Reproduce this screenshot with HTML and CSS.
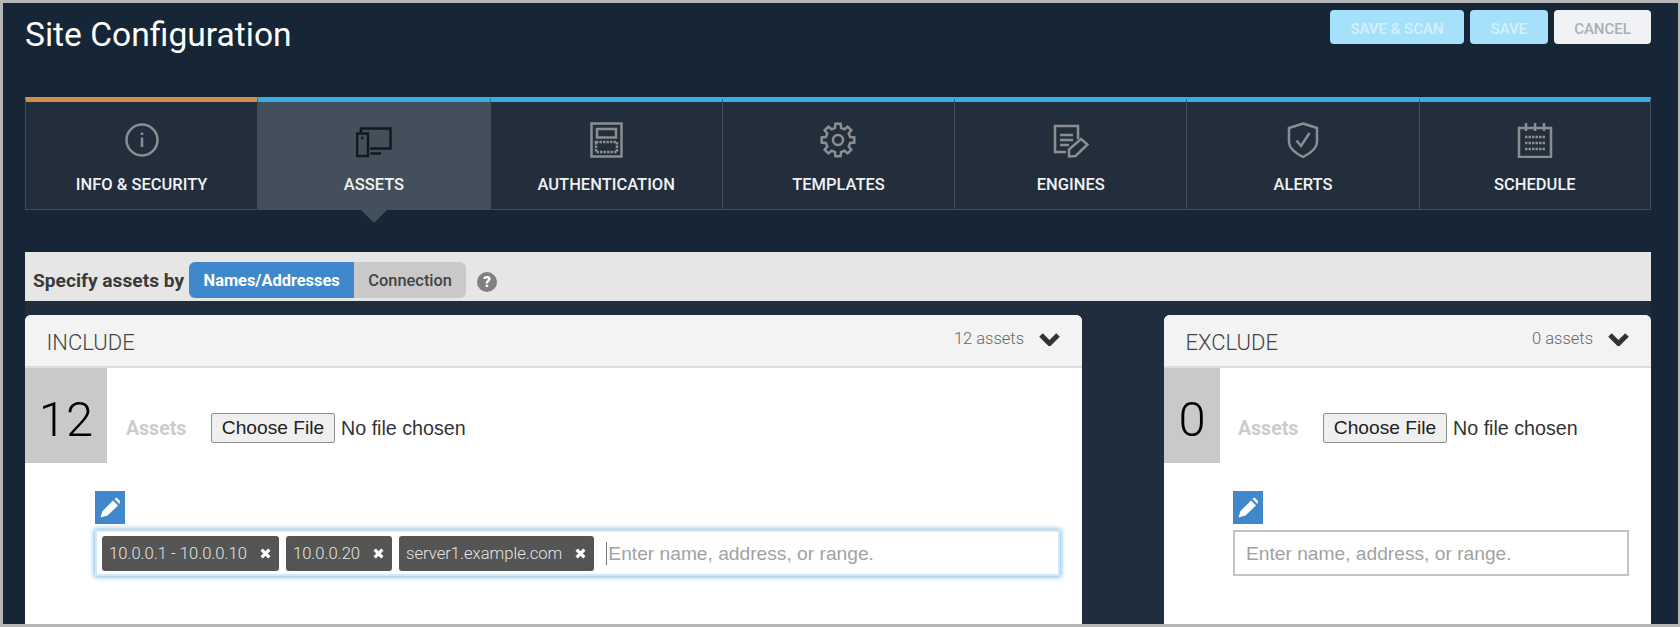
FILE: index.html
```html
<!DOCTYPE html>
<html lang="en">
<head>
    <meta charset="UTF-8">
    <meta name="viewport" content="width=device-width, initial-scale=1.0">
    <title>Site Configuration</title>
    <link rel="stylesheet" href="styles.css">
</head>
<body>
    <div class="frame">
        <header class="top">
            <h1 class="title">Site Configuration</h1>
            <div class="actions">
                <button class="action primary wide">SAVE &amp; SCAN</button>
                <button class="action primary">SAVE</button>
                <button class="action cancel">CANCEL</button>
            </div>
        </header>

        <nav class="tabs">
            <div class="tab tab-info">
                <svg class="tab-icon" viewBox="0 0 36 36"><circle cx="18" cy="18" r="15.5"/><path d="M18 15.5V25M18 10.5V13"/></svg>
                <span>INFO &amp; SECURITY</span>
            </div>
            <div class="tab active">
                <svg class="tab-icon" viewBox="0 0 36 36"><path d="M5 11V6.500H34.500V26.500H14"/><rect x="1" y="11.500" width="11" height="22.500"/><path d="M14.500 31.500H25M5 16H7.500"/></svg>
                <span>ASSETS</span>
            </div>
            <div class="tab">
                <svg class="tab-icon" viewBox="0 0 36 36"><rect x="3.500" y="1.500" width="30" height="33"/><rect x="9" y="7" width="19" height="8.500"/><rect class="dots" x="8" y="20" width="21" height="10"/></svg>
                <span>AUTHENTICATION</span>
            </div>
            <div class="tab">
                <svg class="tab-icon" viewBox="0 0 36 36"><polygon points="14.98,5.87 15.42,1.7 20.58,1.7 21.02,5.87 24.44,7.29 27.7,4.65 31.35,8.3 28.71,11.56 30.13,14.98 34.3,15.42 34.3,20.58 30.13,21.02 28.71,24.44 31.35,27.7 27.7,31.35 24.44,28.71 21.02,30.13 20.58,34.3 15.42,34.3 14.98,30.13 11.56,28.71 8.3,31.35 4.65,27.7 7.29,24.44 5.87,21.02 1.7,20.58 1.7,15.42 5.87,14.98 7.29,11.56 4.65,8.3 8.3,4.65 11.56,7.29"/><circle cx="18" cy="18" r="5"/></svg>
                <span>TEMPLATES</span>
            </div>
            <div class="tab">
                <svg class="tab-icon" viewBox="0 0 36 36"><path d="M25 17V4H2V30H13M7 13H20M7 18H20M7 23H16"/><path d="M16 27.500L28 17L34.500 22.500L22.500 34L16 34.500Z"/></svg>
                <span>ENGINES</span>
            </div>
            <div class="tab">
                <svg class="tab-icon" viewBox="0 0 36 36"><path d="M18 1.500L32 6V20C32 27 25 31.500 18 35C11 31.500 4 27 4 20V6Z"/><path d="M11.500 18.500L16 24L24.500 11"/></svg>
                <span>ALERTS</span>
            </div>
            <div class="tab">
                <svg class="tab-icon" viewBox="0 0 36 36"><rect x="2" y="6" width="32" height="29"/><path d="M9 1V9M18 1V9M27 1V9"/><path class="dots" d="M8 15H28M8 21H28M8 27H28"/></svg>
                <span>SCHEDULE</span>
            </div>
        </nav>

        <div class="specify">
            <span class="specify-label">Specify assets by</span>
            <div class="segments">
                <span class="segment on">Names/Addresses</span>
                <span class="segment">Connection</span>
            </div>
            <span class="help">?</span>
        </div>

        <div class="panels">
            <section class="panel">
                <div class="panel-head">
                    <span class="panel-title">INCLUDE</span>
                    <span class="panel-count">12 assets</span>
                    <svg class="chevron" viewBox="0 0 21 14"><path d="M2 3L10.500 11.500L19 3"/></svg>
                </div>
                <div class="asset-row">
                    <div class="count count-big">12</div>
                    <div class="asset-fields">
                        <span class="asset-label">Assets</span>
                        <button class="file-btn">Choose File</button>
                        <span class="file-name">No file chosen</span>
                    </div>
                </div>
                <div class="editor">
                    <button class="edit-btn">
                        <svg viewBox="0 0 30 33"><path d="M5.500 26.500L7.500 20L18 9.500L23 14.500L12.500 24.500ZM19.500 8L21.500 6.500L25 10L24.500 13Z"/></svg>
                    </button>
                    <div class="tag-input focused">
                        <span class="tag">10.0.0.1 - 10.0.0.10<svg class="tag-x" viewBox="0 0 10 10"><path d="M1.500 1.500L8.500 8.500M8.500 1.500L1.500 8.500"/></svg></span>
                        <span class="tag">10.0.0.20<svg class="tag-x" viewBox="0 0 10 10"><path d="M1.500 1.500L8.500 8.500M8.500 1.500L1.500 8.500"/></svg></span>
                        <span class="tag">server1.example.com<svg class="tag-x" viewBox="0 0 10 10"><path d="M1.500 1.500L8.500 8.500M8.500 1.500L1.500 8.500"/></svg></span>
                        <span class="placeholder with-caret">Enter name, address, or range.</span>
                    </div>
                </div>
            </section>

            <section class="panel">
                <div class="panel-head">
                    <span class="panel-title">EXCLUDE</span>
                    <span class="panel-count">0 assets</span>
                    <svg class="chevron" viewBox="0 0 21 14"><path d="M2 3L10.500 11.500L19 3"/></svg>
                </div>
                <div class="asset-row">
                    <div class="count">0</div>
                    <div class="asset-fields">
                        <span class="asset-label">Assets</span>
                        <button class="file-btn">Choose File</button>
                        <span class="file-name">No file chosen</span>
                    </div>
                </div>
                <div class="editor">
                    <button class="edit-btn">
                        <svg viewBox="0 0 30 33"><path d="M5.500 26.500L7.500 20L18 9.500L23 14.500L12.500 24.500ZM19.500 8L21.500 6.500L25 10L24.500 13Z"/></svg>
                    </button>
                    <div class="tag-input">
                        <span class="placeholder">Enter name, address, or range.</span>
                    </div>
                </div>
            </section>
        </div>
    </div>
</body>
</html>
```

FILE: styles.css
```css
* {
    box-sizing: border-box;
}
html, body {
    margin: 0;
    height: 100%;
    overflow: hidden;
}
body {
    font-family: Roboto, Arial, sans-serif;
    background-color: #17273a;
}
.frame {
    display: flex;
    flex-direction: column;
    height: 627px;
    padding: 0 27px 0 22px;
    border: 3px solid #b4b6b8;
    border-right-width: 2px;
    background-color: #162636;
    overflow: hidden;
}

/* title and save buttons */
.top {
    display: flex;
    justify-content: space-between;
    align-items: flex-start;
    height: 94px;
    padding-top: 7px;
}
.title {
    margin: 6px 0 0;
    font-size: 33.6px;
    line-height: 38px;
    font-weight: 400;
    color: #ffffff;
}
.actions {
    display: flex;
    gap: 6px;
}
.action {
    height: 34px;
    padding: 4px 0 0;
    width: 78px;
    border: none;
    border-radius: 4px;
    font-family: Roboto, Arial, sans-serif;
    font-size: 15px;
    font-weight: 500;
}
.action.wide {
    width: 134px;
}
.action.primary {
    background-color: #a6e1fb;
    color: #d6f0fb;
}
.action.cancel {
    width: 97px;
    background-color: #f0f2f5;
    color: #a9afb6;
}

/* step tabs */
.tabs {
    position: relative;
    display: grid;
    grid-template-columns: repeat(7, 1fr);
    height: 113px;
}
.tab {
    position: relative;
    display: flex;
    flex-direction: column;
    align-items: center;
    padding-top: 20px;
    background-color: #232e3c;
    border-top: 5px solid #38ade3;
    border-left: 1px solid #414d5a;
    border-bottom: 1px solid #414d5a;
    color: #f0f2f4;
    font-size: 16.5px;
    line-height: 20px;
    font-weight: 500;
}
.tab:last-child {
    border-right: 1px solid #414d5a;
}
.tab-info {
    border-top-color: #cd9146;
}
.tab.active {
    background-color: #434f5b;
    border-left-color: #434f5b;
    border-bottom-color: #434f5b;
}
.tab.active::after {
    content: "";
    position: absolute;
    left: 50%;
    top: 108px;
    margin-left: -13px;
    border-left: 13px solid transparent;
    border-right: 13px solid transparent;
    border-top: 13px solid #434f5b;
}
.tab-icon {
    width: 36px;
    height: 36px;
    margin-bottom: 17px;
    fill: none;
    stroke: #8b8e91;
    stroke-width: 2.500;
}
.tab.active .tab-icon {
    stroke: #14181e;
}
.tab-icon .dots {
    stroke-dasharray: 2.500 1;
}

/* specify assets bar */
.specify {
    display: flex;
    align-items: flex-start;
    height: 49px;
    margin-top: 42px;
    padding: 10px 0 0 8px;
    background-color: #e6e6e6;
}
.specify-label {
    margin-right: 5px;
    line-height: 37px;
    font-size: 19.2px;
    font-weight: 700;
    color: #3a3a3a;
}
.segments {
    display: flex;
    height: 36px;
    border-radius: 6px;
    overflow: hidden;
    font-size: 16.4px;
    line-height: 38px;
    font-weight: 500;
}
.segment {
    width: 112px;
    text-align: center;
    background-color: #c9c9c9;
    color: #444444;
}
.segment.on {
    width: 165px;
    background-color: #3f88cb;
    color: #ffffff;
    font-weight: 700;
}
.help {
    width: 20px;
    height: 20px;
    margin: 10px 0 0 11px;
    border-radius: 50%;
    background-color: #808080;
    color: #ffffff;
    font-size: 15px;
    line-height: 20px;
    font-weight: 900;
    text-align: center;
}

/* include and exclude panels */
.panels {
    flex: 1;
    display: grid;
    grid-template-columns: 1057px 487px;
    justify-content: space-between;
    padding-top: 14px;
    background-color: #1f2d3d;
}
.panel {
    background-color: #ffffff;
    border-radius: 6px 6px 0 0;
}
.panel-head {
    display: flex;
    align-items: center;
    height: 53px;
    padding: 0 22px 0 21.500px;
    background-color: #f3f3f3;
    border-bottom: 2px solid #dcdcdc;
    border-radius: 6px 6px 0 0;
}
.panel-title {
    flex: 1;
    font-size: 22px;
    font-weight: 300;
    color: #444444;
    padding-top: 4px;
}
.panel-count {
    margin-right: 15px;
    margin-bottom: 4px;
    font-size: 16.5px;
    font-weight: 300;
    color: #666666;
}
.chevron {
    width: 21px;
    height: 14px;
    margin-bottom: 4px;
    fill: none;
    stroke: #333333;
    stroke-width: 5;
}
.asset-row {
    display: flex;
    height: 95px;
}
.count {
    width: 56px;
    height: 95px;
    margin-right: 18px;
    background-color: #c9c9c9;
    color: #000000;
    font-size: 49px;
    font-weight: 300;
    line-height: 103px;
    text-align: center;
}
.count-big {
    width: 82px;
    margin-right: 19px;
}
.asset-fields {
    display: flex;
    align-items: center;
    padding-top: 25px;
}
.asset-label {
    width: 85px;
    font-size: 19.5px;
    font-weight: 700;
    color: #cccccc;
}
.file-btn {
    width: 124px;
    height: 30px;
    padding: 0;
    background-color: #efefef;
    border: 1px solid #8f8f8f;
    border-radius: 2px;
    font-family: "Liberation Sans", Arial, sans-serif;
    font-size: 19.2px;
    color: #222222;
}
.file-name {
    margin-left: 6px;
    font-family: "Liberation Sans", Arial, sans-serif;
    font-size: 19.7px;
    color: #333333;
}
.editor {
    margin: 28px 22px 0 69px;
}
.panel:first-child .editor {
    margin-left: 70px;
}
.edit-btn {
    display: block;
    width: 30px;
    height: 33px;
    margin-bottom: 6px;
    padding: 0;
    border: none;
    background-color: #3f88cb;
}
.edit-btn svg {
    display: block;
    width: 30px;
    height: 33px;
    fill: #ffffff;
}
.tag-input {
    display: flex;
    align-items: center;
    gap: 7px;
    height: 46px;
    padding: 0 5px;
    background-color: #ffffff;
    border: 2px solid #c4c4c4;
}
.tag-input.focused {
    border-color: #d4e8f6;
    box-shadow: 0 0 5px 1px #7db6e4;
}
.tag {
    display: flex;
    align-items: center;
    justify-content: space-between;
    gap: 13px;
    height: 35px;
    padding: 1px 8px 0 7px;
    background-color: #555555;
    border-radius: 3px;
    color: #e4e4e4;
    font-size: 16.6px;
    font-weight: 300;
}
.tag-x {
    width: 11px;
    height: 11px;
    fill: none;
    stroke: #ffffff;
    stroke-width: 3;
}
.placeholder {
    margin-left: 6px;
    padding-top: 1px;
    font-family: "Liberation Sans", Arial, sans-serif;
    font-size: 19.2px;
    color: #a2a2a2;
}
.with-caret {
    margin-left: 5px;
    padding-left: 1px;
    border-left: 1px solid #777777;
}
```
